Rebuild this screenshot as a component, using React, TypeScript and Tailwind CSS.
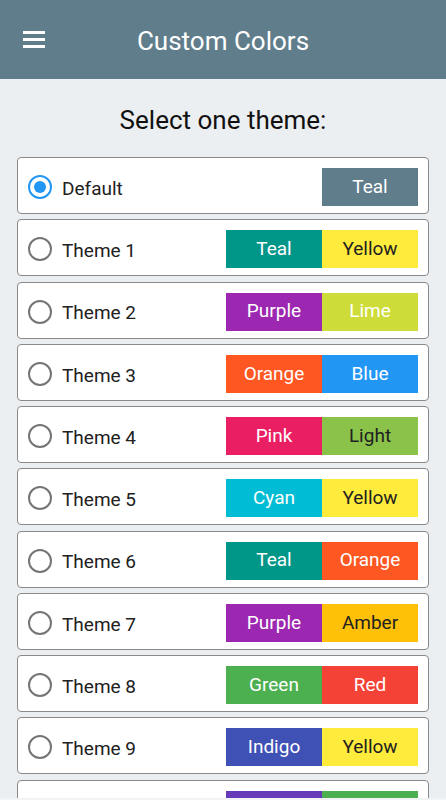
import React from 'react';

const themes = [
  { name: "Default", selected: true, swatches: [{ label: "Teal", bg: "bg-[#607d8b]", fg: "text-white" }] },
  { name: "Theme 1", swatches: [{ label: "Teal", bg: "bg-[#009688]", fg: "text-white" }, { label: "Yellow", bg: "bg-[#ffeb3b]", fg: "text-[#212121]" }] },
  { name: "Theme 2", swatches: [{ label: "Purple", bg: "bg-[#9c27b0]", fg: "text-white" }, { label: "Lime", bg: "bg-[#cddc39]", fg: "text-white" }] },
  { name: "Theme 3", swatches: [{ label: "Orange", bg: "bg-[#ff5722]", fg: "text-white" }, { label: "Blue", bg: "bg-[#2196f3]", fg: "text-white" }] },
  { name: "Theme 4", swatches: [{ label: "Pink", bg: "bg-[#e91e63]", fg: "text-white" }, { label: "Light", bg: "bg-[#8bc34a]", fg: "text-[#212121]" }] },
  { name: "Theme 5", swatches: [{ label: "Cyan", bg: "bg-[#00bcd4]", fg: "text-white" }, { label: "Yellow", bg: "bg-[#ffeb3b]", fg: "text-[#212121]" }] },
  { name: "Theme 6", swatches: [{ label: "Teal", bg: "bg-[#009688]", fg: "text-white" }, { label: "Orange", bg: "bg-[#ff5722]", fg: "text-white" }] },
  { name: "Theme 7", swatches: [{ label: "Purple", bg: "bg-[#9c27b0]", fg: "text-white" }, { label: "Amber", bg: "bg-[#ffc107]", fg: "text-[#212121]" }] },
  { name: "Theme 8", swatches: [{ label: "Green", bg: "bg-[#4caf50]", fg: "text-white" }, { label: "Red", bg: "bg-[#f44336]", fg: "text-white" }] },
  { name: "Theme 9", swatches: [{ label: "Indigo", bg: "bg-[#3f51b5]", fg: "text-white" }, { label: "Yellow", bg: "bg-[#ffeb3b]", fg: "text-[#212121]" }] },
  // scrolled below the fold, only the top of the swatches shows
  { name: "", swatches: [{ label: "", bg: "bg-[#673ab7]", fg: "text-white" }, { label: "", bg: "bg-[#4caf50]", fg: "text-white" }] },
];

export default function App() {
  return (
    <div className="h-[800px] overflow-hidden bg-[#eceff1] font-['Roboto',sans-serif] relative">
      {/* Toolbar */}
      <div className="h-[79px] bg-[#607d8b] flex items-center relative">
        <div className="ml-[23px] flex flex-col gap-[4px]">
          <div className="w-[22px] h-[3px] bg-white" />
          <div className="w-[22px] h-[3px] bg-white" />
          <div className="w-[22px] h-[3px] bg-white" />
        </div>
        <h1 className="absolute left-0 right-0 pt-[2px] text-center text-white text-[26px] leading-[32px] pointer-events-none">
          Custom Colors
        </h1>
      </div>

      <div className="pt-[25px] text-center text-[26px] leading-[32px] text-[#111]">Select one theme:</div>

      <div className="mt-[21px] px-[17px] flex flex-col gap-[5.25px]">
        {themes.map((t, i) => (
          <div
            key={i}
            className="h-[57px] shrink-0 bg-white border border-[#8a8a8a] rounded-[4px] flex items-center pt-[3px] pl-[10px] pr-[10px]"
          >
            {t.selected ? (
              <div className="w-[24px] h-[24px] rounded-full border-2 border-[#2196f3] flex items-center justify-center">
                <div className="w-[12px] h-[12px] rounded-full bg-[#2196f3]" />
              </div>
            ) : (
              <div className="w-[24px] h-[24px] rounded-full border-2 border-[#757575]" />
            )}
            <span className="ml-[10px] pt-[4px] text-[19px] text-[#212121]">{t.name}</span>
            <div className="ml-auto flex">
              {t.swatches.map((s, j) => (
                <div
                  key={j}
                  className={`w-[96px] h-[38px] flex items-center justify-center text-[19px] ${s.bg} ${s.fg}`}
                >
                  {s.label}
                </div>
              ))}
            </div>
          </div>
        ))}
      </div>

      <div className="absolute left-0 right-0 bottom-0 h-[2px] bg-[#f2f4f5]" />
    </div>
  );
}
